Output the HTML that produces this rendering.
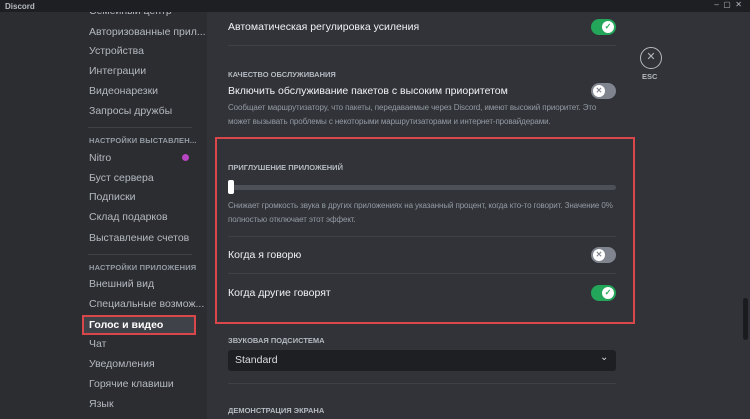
<!DOCTYPE html>
<html><head><meta charset="utf-8"><style>
*{margin:0;padding:0;box-sizing:border-box}
body{width:750px;height:419px;overflow:hidden;background:#313338;font-family:"Liberation Sans",sans-serif;position:relative;color:#dbdee1}
.tb{position:absolute;left:0;top:0;width:750px;height:12px;background:#1e1f22;font-size:8px;font-weight:bold;color:#b5bac1;padding:2px 5px;z-index:5}
.sb{position:absolute;left:0;top:12px;width:207px;height:407px;background:#2b2d31}
.t{position:absolute;white-space:nowrap}
.si{font-size:10.5px;color:#b5bac1;left:89px}
.sh{font-size:7.5px;font-weight:bold;color:#949ba4;left:89px;letter-spacing:.2px}
.dv{position:absolute;height:1px;background:#3f4147}
.tg{position:absolute;width:25px;height:16px;border-radius:8px}
.tg.on{background:#23a55a}.tg.off{background:#80848e}
.tg i{position:absolute;top:2px;width:12px;height:12px;border-radius:50%;background:#fff;font-style:normal;font-size:8px;text-align:center;line-height:12px;font-weight:bold}
.on i{right:2px;color:#23a55a}.off i{left:2px;color:#80848e}
.lbl{font-size:10.5px;color:#f2f3f5;left:228px}
.hd{font-size:7.5px;font-weight:bold;color:#b5bac1;left:228px}
.ds{font-size:8px;color:#949ba4;left:228px;line-height:14px;letter-spacing:-.1px}
</style></head><body>
<div class="tb">Discord<span style="position:absolute;right:8px;top:0;font-weight:normal;color:#b5bac1">–&nbsp;&nbsp;▢&nbsp;&nbsp;✕</span></div>
<div class="sb"></div>
<div class="t si" style="top:5px;">Семейный центр</div>
<div class="t si" style="top:26px">Авторизованные прил...</div>
<div class="t si" style="top:45px">Устройства</div>
<div class="t si" style="top:65px">Интеграции</div>
<div class="t si" style="top:85px">Видеонарезки</div>
<div class="t si" style="top:105px">Запросы дружбы</div>
<div class="dv" style="left:88px;top:127px;width:104px"></div>
<div class="t sh" style="top:136px">НАСТРОЙКИ ВЫСТАВЛЕН...</div>
<div class="t si" style="top:152px">Nitro</div>
<div style="position:absolute;left:182px;top:154px;width:7px;height:7px;border-radius:50%;background:#b845c1"></div>
<div class="t si" style="top:172px">Буст сервера</div>
<div class="t si" style="top:191px">Подписки</div>
<div class="t si" style="top:211px">Склад подарков</div>
<div class="t si" style="top:232px">Выставление счетов</div>
<div class="dv" style="left:88px;top:254px;width:104px"></div>
<div class="t sh" style="top:263px">НАСТРОЙКИ ПРИЛОЖЕНИЯ</div>
<div class="t si" style="top:278px">Внешний вид</div>
<div class="t si" style="top:298px">Специальные возмож...</div>
<div style="position:absolute;left:82px;top:315px;width:114px;height:20px;background:#404249;border:2px solid #d9474b"></div>
<div class="t si" style="top:319px;color:#fff;font-weight:bold">Голос и видео</div>
<div class="t si" style="top:338px">Чат</div>
<div class="t si" style="top:358px">Уведомления</div>
<div class="t si" style="top:378px">Горячие клавиши</div>
<div class="t si" style="top:398px">Язык</div>

<div class="t lbl" style="top:21px">Автоматическая регулировка усиления</div>
<div class="tg on" style="left:591px;top:19px"><i>✓</i></div>
<div class="dv" style="left:228px;top:45px;width:388px"></div>
<div style="position:absolute;left:640px;top:47px;width:22px;height:22px;border:1.5px solid #b5bac1;border-radius:50%;color:#b5bac1;font-size:11px;text-align:center;line-height:19px">✕</div>
<div class="t" style="left:642px;top:72px;font-size:7.5px;font-weight:bold;color:#b5bac1">ESC</div>
<div class="t hd" style="top:70px">КАЧЕСТВО ОБСЛУЖИВАНИЯ</div>
<div class="t lbl" style="top:85px">Включить обслуживание пакетов с высоким приоритетом</div>
<div class="tg off" style="left:591px;top:83px"><i>✕</i></div>
<div class="t ds" style="top:101px">Сообщает маршрутизатору, что пакеты, передаваемые через Discord, имеют высокий приоритет. Это<br>может вызывать проблемы с некоторыми маршрутизаторами и интернет-провайдерами.</div>

<div style="position:absolute;left:215px;top:137px;width:420px;height:187px;border:2px solid #d9474b"></div>
<div class="t hd" style="top:163px">ПРИГЛУШЕНИЕ ПРИЛОЖЕНИЙ</div>
<div style="position:absolute;left:230px;top:185px;width:386px;height:5px;border-radius:3px;background:#4e5058"></div>
<div style="position:absolute;left:228px;top:180px;width:6px;height:14px;border-radius:2px;background:#fff"></div>
<div class="t ds" style="top:199px">Снижает громкость звука в других приложениях на указанный процент, когда кто-то говорит. Значение 0%<br>полностью отключает этот эффект.</div>
<div class="dv" style="left:228px;top:236px;width:388px"></div>
<div class="t lbl" style="top:249px">Когда я говорю</div>
<div class="tg off" style="left:591px;top:247px"><i>✕</i></div>
<div class="dv" style="left:228px;top:273px;width:388px"></div>
<div class="t lbl" style="top:287px">Когда другие говорят</div>
<div class="tg on" style="left:591px;top:285px"><i>✓</i></div>

<div class="t hd" style="top:336px">ЗВУКОВАЯ ПОДСИСТЕМА</div>
<div style="position:absolute;left:228px;top:350px;width:388px;height:21px;background:#1e1f22;border-radius:3px"></div>
<div class="t" style="left:235px;top:354px;font-size:10.5px;color:#dbdee1">Standard</div>
<div class="t" style="left:600px;top:352px;font-size:10px;color:#dbdee1">⌄</div>
<div class="dv" style="left:228px;top:383px;width:388px"></div>
<div class="t hd" style="top:406px">ДЕМОНСТРАЦИЯ ЭКРАНА</div>
<div style="position:absolute;left:743px;top:298px;width:5px;height:42px;border-radius:3px;background:#1a1b1e"></div>
</body></html>
